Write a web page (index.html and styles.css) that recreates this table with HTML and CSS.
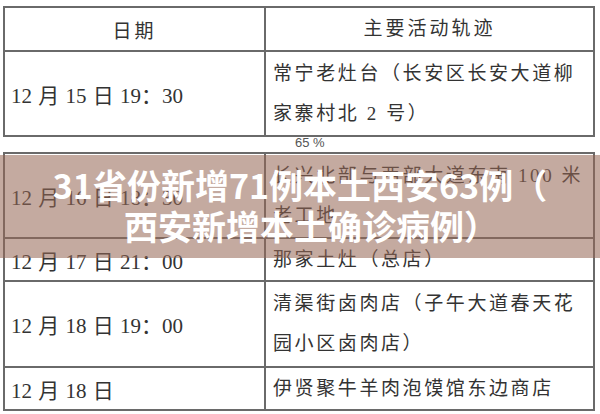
FILE: index.html
```html
<!DOCTYPE html>
<html lang="zh">
<head>
<meta charset="utf-8">
<title>31省份新增71例本土西安63例</title>
<link rel="stylesheet" href="styles.css">
</head>
<body>
<div class="page">
  <table class="sheet">
    <tr class="h44">
      <th class="c1">日期</th>
      <th class="c2">主要活动轨迹</th>
    </tr>
    <tr class="h85">
      <td class="c1">12 月 15 日 19：30</td>
      <td class="c2">常宁老灶台（长安区长安大道柳<br>家寨村北 2 号）</td>
    </tr>
  </table>
  <div class="gap"><span class="pct">65 %</span></div>
  <table class="sheet">
    <tr class="h85">
      <td class="c1">12 月 16 日 18：30</td>
      <td class="c2">长兴北部与西部大道东南 100 米<br>老工地</td>
    </tr>
    <tr class="h43">
      <td class="c1">12 月 17 日 21：00</td>
      <td class="c2">那家土灶（总店）</td>
    </tr>
    <tr class="h86">
      <td class="c1">12 月 18 日 19：00</td>
      <td class="c2">清渠街卤肉店（子午大道春天花<br>园小区卤肉店）</td>
    </tr>
    <tr class="h43">
      <td class="c1">12 月 18 日</td>
      <td class="c2">伊贤聚牛羊肉泡馍馆东边商店</td>
    </tr>
  </table>
  <div class="banner">
    <h1 class="title"><span class="line">31省份新增71例本土西安63例（</span><span class="line second">西安新增本土确诊病例）</span></h1>
  </div>
</div>
</body>
</html>
```
FILE: styles.css
```css
html, body {
  margin: 0;
  padding: 0;
  background: #ffffff;
}
.page {
  position: relative;
  width: 600px;
  height: 414px;
  overflow: hidden;
  padding: 6px 0 0 3px;
  box-sizing: border-box;
  font-family: "Liberation Serif", "Noto Sans CJK SC", serif;
  color: #333333;
}
.sheet {
  border-collapse: collapse;
  width: 592px;
  table-layout: fixed;
}
.sheet th, .sheet td {
  border: 2px solid #6a6a6a;
  padding: 0 0 0 7px;
  vertical-align: middle;
  text-align: left;
  font-weight: normal;
}
.sheet th {
  text-align: center;
  padding: 0;
}
.sheet td.c1 {
  padding-left: 6px;
}
.sheet .c1 {
  width: 261px;
  box-sizing: border-box;
  font-size: 21px;
  word-spacing: 1px;
}
.sheet .c2 {
  font-size: 19px;
  letter-spacing: 2.6px;
  line-height: 40px;
}
.sheet th.c1, .sheet th.c2 {
  font-size: 19px;
  letter-spacing: 3px;
}
.h44 { height: 44px; }
.h85 { height: 85px; }
.h86 { height: 86px; }
.h43 { height: 43px; }
.gap {
  height: 15px;
  position: relative;
  overflow: hidden;
}
.pct {
  display: block;
  margin-left: 292px;
  margin-top: -1px;
  font-family: "Liberation Sans", sans-serif;
  font-size: 13px;
  color: #555;
  line-height: 14px;
}
.banner {
  position: absolute;
  left: 0;
  top: 155px;
  width: 600px;
  height: 103px;
  background: rgba(150, 103, 85, 0.56);
  display: flex;
  align-items: center;
  justify-content: center;
}
.title {
  margin: 0;
  font-family: "Noto Sans CJK SC", "Noto Sans", sans-serif;
  font-weight: 700;
  font-size: 34px;
  line-height: 41px;
  color: #ffffff;
  text-align: center;
  margin-top: -3px;
}
.line {
  display: block;
}
.second {
  padding-left: 22px;
}
```
